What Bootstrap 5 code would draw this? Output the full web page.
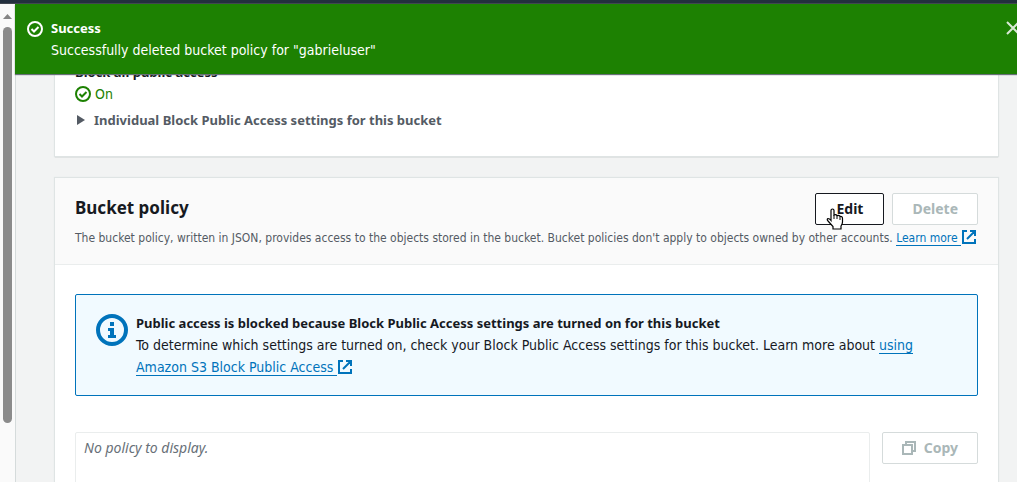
<!DOCTYPE html>
<html lang="en">
<head>
<meta charset="utf-8">
<meta name="viewport" content="width=device-width, initial-scale=1">
<title>Bucket policy</title>
<link href="https://cdn.jsdelivr.net/npm/bootstrap@5.3.0/dist/css/bootstrap.min.css" rel="stylesheet">
<style>
body { font-family: "DejaVu Sans Condensed", "Noto Sans", sans-serif; font-size: 14px; line-height: 22px; color: #16191f; background: #f2f3f3; }
.strong-line { font-family: "Noto Sans", sans-serif; font-size: 13px; line-height: 22px; font-weight: 700; }
.topbar { height: 4px; background: #232f3e; border-bottom: 1px solid #414750; }
.page-shell { height: 100vh; }
.scroll-rail { width: 16px; background: #fafafa; border-right: 1px solid #d5dbdb; padding-top: 10px; }
.rail-thumb { width: 9px; height: 396px; border-radius: 5px; background: #8b8b8b; margin-top: 8px; }
.flash { left: 15px; right: 0; top: 0; height: 70px; padding: 13px 0 0 12px; background: #1d8102; color: #fff; z-index: 2; box-shadow: 0 1px 1px #687078; }
.flash-close { margin-right: -9px; margin-top: 4px; line-height: 0; }
.content { padding: 57px 19px 0 39px; }
.panel { background: #fff; box-shadow: 0 0 1px 1px #dfe4e4, 0 1px 1px #879596; margin-bottom: 22px; }
.panel-first { padding: 0 20px 25px; }
.panel-head { background: #fafafa; border-bottom: 1px solid #eaeded; padding: 15px 20px; }
.panel-head h2 { font-family: "Noto Sans", sans-serif; font-size: 17px; line-height: 30px; font-weight: 700; }
.panel-main { padding: 29px 20px 40px; }
.status-ok { color: #1d8102; }
.grey { color: #545b64; }
.desc { font-size: 12px; margin: 2px 0 0; }
.ext { color: #0073bb; text-decoration: none; }
.ext .under { border-bottom: 1px solid #0073bb; }
.ext svg { margin-left: 1px; vertical-align: -2px; }
.btn-aws { font-family: "Noto Sans", sans-serif; font-size: 14px; line-height: 22px; font-weight: 700; border-radius: 2px; padding: 4px 19px; border: 1px solid #16191f; background: #fff; color: #16191f; }
.btn-edit { padding: 4px 20px; }
.btn-aws:disabled { opacity: 1; color: #aab7b8; border-color: #d5dbdb; background: #fff; }
.info { border: 1px solid #0073bb; border-radius: 2px; background: #f1faff; padding: 17px 20px; margin-bottom: 36px; }
.info-icon { margin: 2px 8px 0 0; }
.policy-box { font-family: "Noto Sans", sans-serif; border: 1px solid #eaeded; border-radius: 2px; padding: 4px 8px; min-height: 160px; color: #687078; }
.pointer { left: 9px; top: 13px; }
</style>
</head>
<body class="overflow-hidden">
<div class="page-shell d-flex flex-column overflow-hidden">
  <div class="topbar flex-shrink-0"></div>
  <div class="d-flex flex-grow-1 position-relative overflow-hidden">
    <div class="scroll-rail flex-shrink-0 d-flex flex-column align-items-center">
      <svg width="9" height="5" viewBox="0 0 9 5"><path d="M4.500 0 9 5H0z" fill="#858585"/></svg>
      <div class="rail-thumb"></div>
    </div>

    <div class="flash position-absolute d-flex" role="status">
      <svg class="flex-shrink-0 me-2 mt-1" width="16" height="16" viewBox="0 0 16 16" fill="none" stroke="#fff" stroke-width="2"><circle cx="8" cy="8" r="7"/><path d="m4.500 8 2.500 2.500L11.500 6"/></svg>
      <div class="flex-grow-1">
        <div class="strong-line">Success</div>
        <div>Successfully deleted bucket policy for "gabrieluser"</div>
      </div>
      <button type="button" class="flash-close btn p-0 border-0 align-self-start" aria-label="Dismiss">
        <svg width="20" height="16" viewBox="0 0 20 16" fill="none" stroke="#d9e9d5" stroke-width="2"><path d="m1 1 12 12M13 1 1 13"/></svg>
      </button>
    </div>

    <main class="content flex-grow-1">
      <section class="panel panel-first">
        <div class="strong-line">Block all public access</div>
        <div class="status-ok d-flex align-items-center gap-1">
          <svg width="16" height="16" viewBox="0 0 16 16" fill="none" stroke="currentColor" stroke-width="2"><circle cx="8" cy="8" r="7"/><path d="m4.500 8 2.500 2.500L11.500 6"/></svg>
          <span>On</span>
        </div>
        <button type="button" class="btn p-0 border-0 mt-1 d-flex align-items-center grey strong-line">
          <svg class="me-2" width="11" height="10" viewBox="0 0 11 10"><path d="M2 0l8 5-8 5z" fill="currentColor"/></svg>Individual Block Public Access settings for this bucket
        </button>
      </section>

      <section class="panel">
        <header class="panel-head">
          <div class="d-flex justify-content-between">
            <h2 class="mb-0">Bucket policy</h2>
            <div class="d-flex gap-2">
              <button type="button" class="btn btn-aws btn-edit position-relative">Edit
                <svg class="pointer position-absolute" width="20" height="24" viewBox="0 0 20 24" aria-hidden="true"><path d="M6 12V3.500a1.500 1.500 0 0 1 3 0V8q2-1 3 .6 2-.8 3 .8 2.500-.4 2.500 2V15q0 2-1.500 4v3H8v-2.500L3 14q-1.500-2 0-2.500 1.500 0 3 2z" fill="#fff" stroke="#000" stroke-width="1.200"/><path d="M9 8v4M12 9v3M15 10v3" stroke="#000"/></svg>
              </button>
              <button type="button" class="btn btn-aws" disabled>Delete</button>
            </div>
          </div>
          <p class="desc grey">The bucket policy, written in JSON, provides access to the objects stored in the bucket. Bucket policies don't apply to objects owned by other accounts. <a class="ext text-nowrap" href="#"><span class="under">Learn more </span><svg width="14" height="14" viewBox="0 0 14 14" fill="none" stroke="currentColor" stroke-width="2"><path d="M5 1H1v12h12V9M8 1h5v5M13 1 5 9"/></svg></a></p>
        </header>
        <div class="panel-main">
          <div class="info d-flex">
            <svg class="info-icon flex-shrink-0" width="32" height="32" viewBox="0 0 32 32"><circle cx="16" cy="16" r="14" fill="none" stroke="#0073bb" stroke-width="4"/><path d="M14 8h4v4h-4zM12 14h6v7h2v3h-8v-3h2v-4h-2z" fill="#0073bb"/></svg>
            <div>
              <div class="strong-line">Public access is blocked because Block Public Access settings are turned on for this bucket</div>
              <div>To determine which settings are turned on, check your Block Public Access settings for this bucket. Learn more about <a class="ext" href="#"><span class="under">using Amazon S3 Block Public Access </span><svg width="14" height="14" viewBox="0 0 14 14" fill="none" stroke="currentColor" stroke-width="2"><path d="M5 1H1v12h12V9M8 1h5v5M13 1 5 9"/></svg></a></div>
            </div>
          </div>
          <div class="d-flex align-items-start">
            <div class="policy-box flex-grow-1 me-2"><em>No policy to display.</em></div>
            <button type="button" class="btn btn-aws ms-1 d-flex align-items-center justify-content-center" disabled>
              <svg class="me-2" width="14" height="14" viewBox="0 0 14 14" fill="none" stroke="currentColor" stroke-width="2"><path d="M1 4h9v9H1zM4 4V1h9v9h-3"/></svg>Copy
            </button>
          </div>
        </div>
      </section>
    </main>
  </div>
</div>
<script src="https://cdn.jsdelivr.net/npm/bootstrap@5.3.0/dist/js/bootstrap.bundle.min.js"></script>
</body>
</html>
